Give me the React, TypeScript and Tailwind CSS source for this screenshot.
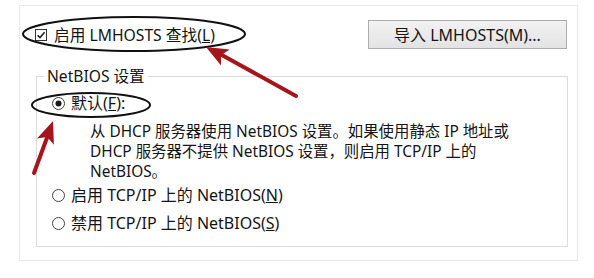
import React from "react";

const font = { fontFamily: '"Noto Sans", "Noto Sans CJK SC", sans-serif' };

function Checkbox() {
  return (
    <svg width="12" height="12" viewBox="0 0 12 12" className="shrink-0">
      <rect x="0.5" y="0.5" width="11" height="11" fill="#fff" stroke="#333" />
      <path d="M2.6 6.2 L5 8.6 L9.6 3.2" fill="none" stroke="#222" strokeWidth="1.6" />
    </svg>
  );
}

function Radio({ checked }: { checked?: boolean }) {
  return (
    <svg width="13" height="13" viewBox="0 0 13 13" className="shrink-0">
      <circle cx="6.5" cy="6.5" r="6" fill="#fff" stroke="#444" />
      {checked && <circle cx="6.5" cy="6.5" r="3" fill="#1a1a1a" />}
    </svg>
  );
}

// arrow head polygon pointing from tail to tip
function arrowHead(tx: number, ty: number, fx: number, fy: number, len = 22, half = 9) {
  const dx = tx - fx;
  const dy = ty - fy;
  const d = Math.hypot(dx, dy);
  const ux = dx / d;
  const uy = dy / d;
  const bx = tx - ux * len;
  const by = ty - uy * len;
  const nx = bx + ux * 5;
  const ny = by + uy * 5;
  return [
    `${tx},${ty}`,
    `${bx - uy * half},${by + ux * half}`,
    `${nx},${ny}`,
    `${bx + uy * half},${by - ux * half}`,
  ].join(" ");
}

function Overlay() {
  const red = "#a5161c";
  return (
    <svg width="594" height="278" className="absolute inset-0 pointer-events-none">
      <ellipse cx="134" cy="34" rx="111" ry="17" fill="none" stroke="#111" strokeWidth="2" />
      <ellipse cx="91" cy="105" rx="59" ry="12" fill="none" stroke="#111" strokeWidth="2" />
      <line x1="296" y1="96" x2="220" y2="54" stroke={red} strokeWidth="4" strokeLinecap="round" />
      <polygon points={arrowHead(206, 47, 296, 96)} fill={red} />
      <line x1="34" y1="173" x2="48" y2="135" stroke={red} strokeWidth="4" strokeLinecap="round" />
      <polygon points={arrowHead(53, 121, 34, 173)} fill={red} />
    </svg>
  );
}

export default function App() {
  return (
    <div className="relative w-[594px] h-[278px] bg-white pl-[19px] pt-[5px] text-[#141414]" style={font}>
      <div className="w-[559px] h-[256px] border border-[#e8e8e8] pl-[15px] pr-[10px]">
        <div className="flex items-center justify-between mt-[14px]">
          <label className="flex items-center gap-[7px] text-[15.7px] leading-[20px]">
            <Checkbox />
            <span>
              启用 LMHOSTS 查找(<span className="underline">L</span>)
            </span>
          </label>
          <button className="w-[199px] h-[29px] border border-[#acacac] bg-gradient-to-b from-[#f2f2f2] to-[#e3e3e3] text-[16px] leading-[20px]">
            导入 LMHOSTS(M)...
          </button>
        </div>

        <fieldset className="mt-[19px] ml-[1px] w-[532px] h-[179px] border border-[#dcdcdc] p-0">
          <legend className="ml-[7px] px-[3px] text-[15.6px] leading-[16px]">NetBIOS 设置</legend>
          <div className="pl-[15px] pt-[9px] text-[16px]">
            <div className="flex items-center gap-[6px] h-[20px] leading-[20px]">
              <Radio checked />
              <span>
                默认(<span className="underline">F</span>):
              </span>
            </div>
            <p className="mt-[9px] pl-[38px] leading-[20px] text-[15.4px]">
              从 DHCP 服务器使用 NetBIOS 设置。如果使用静态 IP 地址或
              <br />
              DHCP 服务器不提供 NetBIOS 设置，则启用 TCP/IP 上的
              <br />
              NetBIOS。
            </p>
            <div className="flex items-center gap-[6px] h-[20px] leading-[20px] mt-[3px]">
              <Radio />
              <span>
                启用 TCP/IP 上的 NetBIOS(<span className="underline">N</span>)
              </span>
            </div>
            <div className="flex items-center gap-[6px] h-[20px] leading-[20px] mt-[8px]">
              <Radio />
              <span>
                禁用 TCP/IP 上的 NetBIOS(<span className="underline">S</span>)
              </span>
            </div>
          </div>
        </fieldset>
      </div>
      <Overlay />
    </div>
  );
}
